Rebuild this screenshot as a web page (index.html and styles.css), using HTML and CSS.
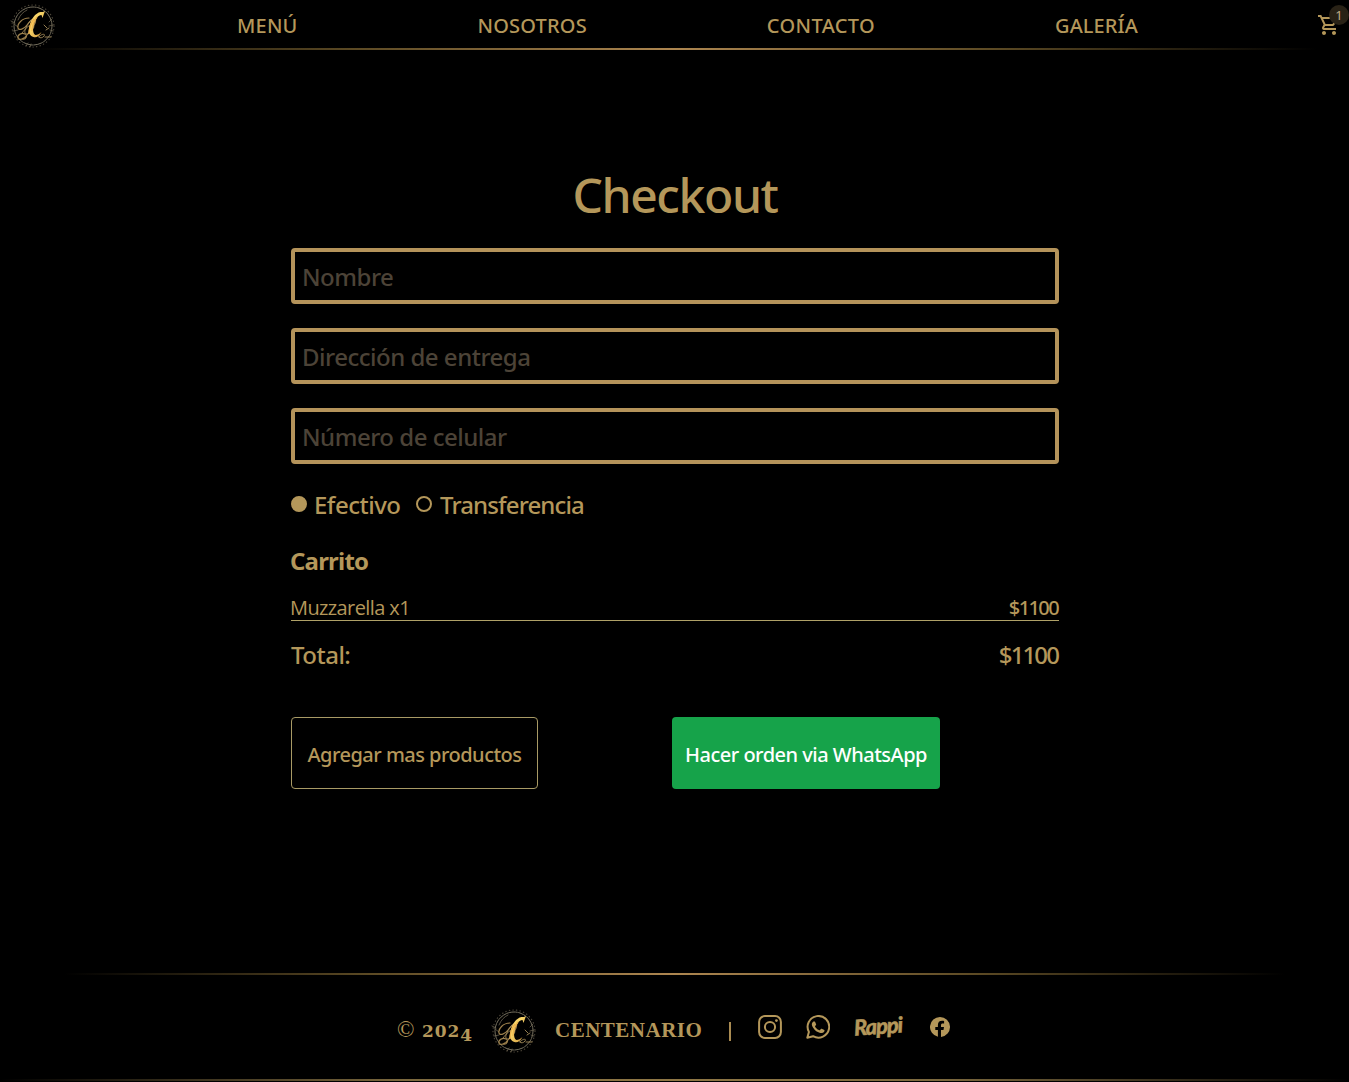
FILE: index.html
```html
<!DOCTYPE html>
<html lang="es">
<head>
<meta charset="utf-8">
<title>Checkout - Centenario</title>
<link rel="stylesheet" href="styles.css">
</head>
<body>
<svg class="defs" width="0" height="0" aria-hidden="true">
  <defs>
    <linearGradient id="gold" x1="0" y1="0" x2="1" y2="1">
      <stop offset="0" stop-color="#ffd870"/><stop offset=".4" stop-color="#f7d568"/><stop offset="1" stop-color="#c98a35"/>
    </linearGradient>
  </defs>
  <symbol id="logo" viewBox="0 0 46 46">
    <g fill="none" stroke-linecap="round">
      <circle cx="23" cy="23" r="19" stroke="#77715f" stroke-width="1" stroke-dasharray="7 1 2 .6"/>
      <circle cx="23" cy="23" r="21" stroke="#4a4437" stroke-width="1.2" stroke-dasharray=".4 3.2"/>
      <path d="M8 17c2-5 5-8 9-10M1 18l4 2M4 21l4 3M3 28l5-1M42 16l-3 3M43 22l-4 1M43 28l-3-1M16 43l2-3M20 44l1-3" stroke="#6d6551" stroke-width=".8"/>
      <path d="M19 15c-7 0-12 6-11 10 1 3 6 1 9-3 3-4 6-7 8-6 2 2-3 10-7 15-4 5-9 7-10 4-1-3 4-6 7-4 3 1 1 6-3 5" stroke="#9e814c" stroke-width="1.2"/>
      <path d="M21 17c-4 5-7 10-6 13 2 3 7-2 9-6M12 30c4-5 7-8 8-7 1 2-3 7-1 8M29 34c3-4 7-3 5-1-2 3-7 2-5-1M35 34h6M34 22l3 3M36 27l3-2" stroke="#a48b59" stroke-width=".9"/>
    </g>
    <path d="M35 8l-2.500 7-1-3c-4 0-7 5-8 11-1 5 0 8 2 9 2 0 4-1 6-3-2 4-5 6-8 5-4-1-5-5-4-10 1-8 6-14 11-15 2 0 3 0 4.500-1z" fill="url(#gold)"/>
    <path d="M24 16c-4 5-5 10-5 15M27 14c-3 4-5 10-5 14" fill="none" stroke="#eeb44e" stroke-width="1.300"/>
  </symbol>
</svg>

<header class="header">
  <svg class="logo header-logo"><use href="#logo"/></svg>
  <nav class="nav">
    <a class="nav-menu">MENÚ</a>
    <a class="nav-about">NOSOTROS</a>
    <a class="nav-contact">CONTACTO</a>
    <a class="nav-gallery">GALERÍA</a>
  </nav>
  <div class="cart">
    <svg width="24" height="24" viewBox="0 0 24 24" fill="currentColor"><path d="M15.55 13c.75 0 1.41-.41 1.75-1.03l3.58-6.49A.996.996 0 0 0 20.01 4H5.21l-.94-2H1v2h2l3.6 7.59-1.35 2.44C4.52 15.37 5.48 17 7 17h12v-2H7l1.1-2h7.45zM6.16 6h12.15l-2.76 5H8.53L6.16 6zM7 18c-1.1 0-1.99.9-1.99 2S5.9 22 7 22s2-.9 2-2-.9-2-2-2zm10 0c-1.1 0-1.99.9-1.99 2s.89 2 1.99 2 2-.9 2-2-.9-2-2-2z"/></svg>
    <span class="badge">1</span>
  </div>
</header>
<div class="rule rule-top"></div>

<main class="checkout">
  <h1 class="title">Checkout</h1>
  <form class="form">
    <input class="field" type="text" placeholder="Nombre">
    <input class="field" type="text" placeholder="Dirección de entrega">
    <input class="field" type="text" placeholder="Número de celular">
    <div class="payment">
      <label class="option"><span class="dot dot-on"></span><span class="cash">Efectivo</span></label>
      <label class="option"><span class="dot"></span><span class="transfer">Transferencia</span></label>
    </div>
  </form>
  <h2 class="cart-title">Carrito</h2>
  <div class="item"><span class="item-name">Muzzarella x1</span><span class="price">$1100</span></div>
  <div class="total"><span class="total-label">Total:</span><span class="total-price">$1100</span></div>
  <div class="actions">
    <button class="btn btn-more">Agregar mas productos</button>
    <button class="btn btn-order">Hacer orden via WhatsApp</button>
  </div>
</main>

<div class="rule rule-middle"></div>
<footer class="footer">
  <span class="year">© <span class="digits">202<span class="four">4</span></span></span>
  <svg class="logo footer-logo"><use href="#logo"/></svg>
  <span class="brand">CENTENARIO</span>
  <span class="bar"></span>
  <div class="social">
    <svg width="24" height="24" viewBox="0 0 24 24" fill="none" stroke="currentColor" stroke-width="2"><rect x="1.1" y="1.1" width="21.8" height="21.8" rx="5.8"/><circle cx="12" cy="12" r="5.1"/><circle cx="18.4" cy="5.6" r="1.4" fill="currentColor" stroke="none"/></svg>
    <svg width="24" height="24" viewBox="0 0 24 24"><path d="M1.3 22.7l1.6-5.8A10.8 10.8 0 1 1 7.1 21.200z" fill="none" stroke="currentColor" stroke-width="2" stroke-linejoin="round"/><path fill="currentColor" d="M8.900 6.700c-.3-.6-.5-.6-.8-.6h-.7c-.3 0-.7.1-1 .5-.4.400-1.300 1.200-1.300 2.900s1.300 3.400 1.500 3.700c.2.200 2.500 3.900 6.100 5.300 3 1.200 3.700.9 4.300.9.700-.1 2.100-.9 2.400-1.700.3-.8.3-1.500.2-1.700-.1-.2-.3-.3-.7-.4l-2.500-1.200c-.3-.1-.6-.2-.8.200l-1.200 1.400c-.2.300-.4.300-.8.100-.3-.2-1.500-.500-2.800-1.700-1.100-.9-1.800-2.100-2-2.500-.2-.3 0-.5.200-.7l1-1.300c.1-.2.100-.4 0-.7z" transform="translate(1.400 1.200) scale(.87)"/></svg>
    <span class="rappi">Rappi</span>
    <svg class="facebook" width="20" height="20" viewBox="0 0 20 20"><path fill="currentColor" d="M10 0a10 10 0 0 0-2.100 19.780V13H5.300v-3h2.600V8.200c0-3 1.500-4.400 4.200-4.400.6 0 1.500.1 2 .2v2.600h-1.300c-1.300 0-1.800.6-1.800 1.800V10h3l-.5 3H11v6.950A10 10 0 0 0 10 0z"/></svg>
  </div>
</footer>
<div class="rule rule-bottom"></div>
</body>
</html>
```

FILE: styles.css
```css
* { box-sizing: border-box; }
body {
  margin: 0;
  min-height: 1082px;
  overflow: hidden;
  background: #000;
  color: #b4975a;
  font-family: "Noto Sans", sans-serif;
  font-weight: 500;
}
svg { display: block; flex: none; }
.defs { position: absolute; }
.logo { width: 46px; height: 46px; }

.header { display: flex; height: 48px; padding: 3px 0 0 10px; }
.nav {
  display: flex;
  justify-content: space-between;
  width: 901px;
  margin-left: 181px;
  font-size: 20px;
  line-height: 45px;
  white-space: nowrap;
}
.nav-menu { letter-spacing: .2px; }
.nav-about { letter-spacing: .2px; }
.nav-contact { letter-spacing: .4px; }
.nav-gallery { letter-spacing: .1px; }
.cart { position: relative; margin: 10px 0 0 179px; width: 32px; height: 24px; }
.badge {
  position: absolute;
  left: 12px;
  top: -8px;
  width: 20px;
  height: 20px;
  border-radius: 50%;
  background: #292216;
  color: #c0ad86;
  font-size: 13px;
  font-weight: 400;
  line-height: 20px;
  text-align: center;
}
.rule { height: 2px; background: linear-gradient(90deg, transparent, #5c4a24 25%, #ad8650 50%, #5c4a24 75%, transparent); }
.rule-top { margin: 0 32px; }

.checkout { width: 768px; margin: 0 auto 0 291px; padding-top: 120px; }
.title { margin: 0 0 30px; font-size: 48px; font-weight: 500; line-height: 50px; height: 48px; text-align: center; letter-spacing: -1.4px; }
.form { display: flex; flex-direction: column; gap: 24px; }
.field {
  height: 56px;
  padding: 1px 8px 0 7px;
  border: 4px solid #b4935a;
  border-radius: 4px;
  background: #000;
  color: #b4975a;
  font: 500 24px "Noto Sans", sans-serif;
  letter-spacing: -.5px;
}
.field::placeholder { color: #4c4337; opacity: 1; }
.payment { display: flex; gap: 16px; height: 32px; font-size: 24px; line-height: 34px; }
.option { display: flex; gap: 8px; white-space: nowrap; }
.dot { width: 16px; height: 16px; margin-top: 8px; border: 2px solid #b4975a; border-radius: 50%; }
.dot-on { background: #b4975a; }
.cash { width: 85px; letter-spacing: -.5px; margin-left: -1px; margin-right: 1px; }
.transfer { letter-spacing: -.87px; }
.cart-title { height: 32px; margin: 24px 0 16px -1px; font-size: 24px; font-weight: 700; line-height: 34px; letter-spacing: -.8px; }
.item, .total { display: flex; justify-content: space-between; }
.item { height: 29px; border-bottom: 1px solid #b0a268; font-size: 20px; line-height: 32px; }
.item-name { margin-left: -1px; font-family: "Open Sans", sans-serif; font-weight: 400; letter-spacing: -.6px; }
.price { letter-spacing: -1.6px; margin-right: 1px; }
.total { height: 32px; margin-top: 16px; font-size: 24px; line-height: 35px; }
.total-label { letter-spacing: -.5px; }
.total-price { letter-spacing: -1.9px; margin-right: 1px; }
.actions { display: flex; gap: 134px; margin-top: 48px; }
.btn { height: 72px; padding: 3px 0 0; border-radius: 4px; font: 500 20px "Noto Sans", sans-serif; white-space: nowrap; }
.btn-more { width: 247px; border: 1px solid #a89a65; background: #000; color: #b4975a; letter-spacing: -.52px; }
.btn-order { width: 268px; border: 0; background: #16a34a; color: #fff; letter-spacing: -.5px; }

.rule-middle { margin: 184px 64px 0; }
.footer {
  display: flex;
  height: 104px;
  padding: 33px 0 0 397px;
  font-family: "Liberation Serif", serif;
  font-weight: 700;
  font-size: 21px;
  line-height: 44px;
  white-space: nowrap;
}
.year { width: 94px; font-weight: 400; font-size: 23px; letter-spacing: .9px; }
.digits { font-family: "DejaVu Serif", serif; font-weight: 700; font-size: 17px; }
.four { position: relative; top: 4px; }
.brand { width: 147px; margin-left: 18px; letter-spacing: .5px; }
.bar { width: 2px; height: 19px; margin: 14px 27px 0 27px; background: #a98b52; }
.social { display: flex; gap: 24px; height: 24px; margin-top: 7px; }
.rappi { width: 50px; font: italic 900 22px/22px "Lato", sans-serif; letter-spacing: -1.2px; -webkit-text-stroke: .4px; transform: rotate(-4deg); }
.facebook { margin: 2px 0 0 2px; }
.rule-bottom { background: linear-gradient(90deg, transparent, #7c693e 30%, #8f7745 50%, #7c693e 70%, transparent); }
```
